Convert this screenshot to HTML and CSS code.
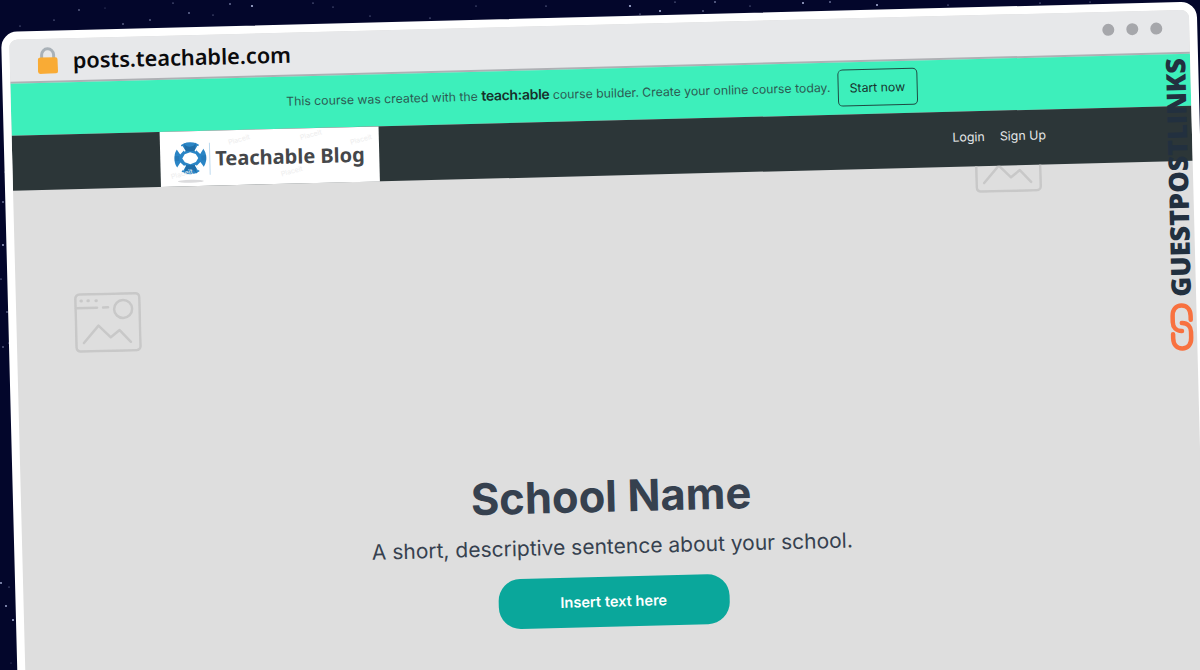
FILE: index.html
```html
<!DOCTYPE html>
<html lang="en">
<head>
<meta charset="utf-8">
<title>posts.teachable.com</title>
<link rel="stylesheet" href="styles.css">
</head>
<body>
<svg class="stars" viewBox="0 0 1200 670" aria-hidden="true">
  <g fill="#aeb6dc">
    <circle cx="79" cy="10" r=".7"/><circle cx="252" cy="6" r="1.1"/><circle cx="189" cy="13" r=".8"/><circle cx="54" cy="20" r=".6"/><circle cx="123" cy="24" r=".7"/><circle cx="150" cy="20" r=".7"/><circle cx="230" cy="4" r=".8"/><circle cx="173" cy="3" r=".6"/><circle cx="313" cy="3" r=".6"/><circle cx="333" cy="7" r=".5"/><circle cx="213" cy="15" r=".5"/><circle cx="20" cy="26" r=".5"/><circle cx="105" cy="8" r=".4"/><circle cx="370" cy="16" r=".5"/>
    <circle cx="430" cy="18" r=".6"/><circle cx="546" cy="6" r=".6"/><circle cx="630" cy="6" r="1.1"/><circle cx="660" cy="11" r="1"/><circle cx="640" cy="14" r=".6"/><circle cx="675" cy="2" r=".6"/><circle cx="703" cy="11" r=".7"/><circle cx="715" cy="2" r=".8"/><circle cx="803" cy="3" r="1"/><circle cx="830" cy="2" r=".8"/><circle cx="877" cy="5" r="1"/><circle cx="750" cy="6" r=".5"/><circle cx="476" cy="6" r=".5"/><circle cx="948" cy="5" r=".6"/><circle cx="1040" cy="3" r=".6"/><circle cx="1090" cy="2" r=".5"/>
    <circle cx="5" cy="172" r=".5"/><circle cx="3" cy="202" r=".8"/><circle cx="3" cy="245" r=".9"/><circle cx="1" cy="279" r=".6"/><circle cx="7" cy="312" r=".7"/><circle cx="9" cy="343" r=".6"/><circle cx="3" cy="347" r=".7"/>
    <circle cx="1" cy="583" r=".9"/><circle cx="9" cy="587" r=".5"/><circle cx="6" cy="606" r=".9"/><circle cx="13" cy="620" r="1"/><circle cx="11" cy="663" r=".4"/>
  </g>
</svg>
<main class="window">
  <header class="address-bar">
    <svg class="lock" viewBox="0 0 20 27" aria-hidden="true">
      <path d="M4 12V8a6 6 0 0 1 12 0v4" fill="none" stroke="#a9b1b8" stroke-width="3"/>
      <rect y="10.500" width="20" height="16.500" rx="2.500" fill="#f9ab35"/>
    </svg>
    <span class="url">posts.teachable.com</span>
    <div class="dots"><i class="dot"></i><i class="dot"></i><i class="dot"></i></div>
  </header>
  <div class="promo">
    <p class="promo-text">This course was created with the <b class="brand">teach:able</b> course builder. Create your online course today.</p>
    <a class="start-btn">Start now</a>
  </div>
  <nav class="navbar">
    <a class="logo">
      <span class="mark-text mt1">Placeit</span><span class="mark-text mt2">Placeit</span><span class="mark-text mt3">Placeit</span><span class="mark-text mt4">Placeit</span><span class="mark-text mt5">Placeit</span>
      <svg class="logo-mark" viewBox="0 0 34 44" aria-hidden="true">
        <ellipse cx="16" cy="40" rx="13" ry="1.500" fill="#dcdcde"/>
        <circle cx="16" cy="17" r="16" fill="#2b86c6"/>
        <path d="M10 1C11 7 21 7 22 1L21 10H11ZM10 33C11 27 21 27 22 33L21 24H11Z" fill="#1f6ea8"/>
        <path d="M2 7 6.500 3 10 9 6 13ZM30 7 25.500 3 22 9 26 13ZM2 27l4.500 4L10 25l-4-4ZM30 27l-4.500 4L22 25l4-4Z" fill="#fff"/>
        <path d="M16 11l5.500 2 2.500 4-2.500 4-5.500 2-5.500-2-2.500-4 2.500-4Z" fill="#fff"/>
        <path d="M11 10 8 5M21 10l3-5M11 24l-3 5M21 24l3 5" stroke="#fff" stroke-width="1.400"/>
        <path d="M0 17h5M27 17h5" stroke="#1f6ea8" stroke-width="5" opacity=".45"/>
      </svg>
      <i class="logo-rule"></i>
      <span class="logo-text">Teachable Blog</span>
    </a>
    <div class="nav-links"><a>Login</a><a>Sign Up</a></div>
  </nav>
  <section class="hero">
    <svg class="placeholder ph-one" viewBox="0 0 67 60" aria-hidden="true"><use href="#ph"/></svg>
    <svg class="placeholder ph-two" viewBox="0 0 67 60" aria-hidden="true">
      <g id="ph" fill="none" stroke="#c8c8c8" stroke-width="2.500" stroke-linecap="round" stroke-linejoin="round">
        <rect x="1.500" y="1.500" width="64" height="57" rx="4"/>
        <path d="M2 15h21M29 15h5"/>
        <circle cx="49" cy="17" r="9"/>
        <path d="M9 50 24 33l12 12 9-7 11 12"/>
        <path d="M7 8h.5M14 8h.5M22 8h.5" stroke-width="3"/>
      </g>
    </svg>
    <h1 class="hero-title">School Name</h1>
    <p class="hero-sub">A short, descriptive sentence about your school.</p>
    <a class="hero-btn">Insert text here</a>
  </section>
  <aside class="badge">
    <span class="badge-text">GUESTPOSTLINKS</span>
    <svg class="chain" viewBox="0 0 24 48" aria-hidden="true">
      <g fill="none" stroke="#f8713f" stroke-width="4.500" stroke-linecap="round">
        <path d="M12 28C6 28 3 24 3 19V13C3 6 7 2.500 12 2.500S21 6 21 13V17"/>
        <path d="M12 20C18 20 21 24 21 29V35C21 42 17 45.500 12 45.500S3 42 3 35V31"/>
      </g>
    </svg>
  </aside>
</main>
</body>
</html>
```

FILE: styles.css
```css
* { box-sizing: border-box; }
html, body { margin: 0; height: 100%; }
body {
  position: relative;
  overflow: hidden;
  background: #03062b;
  font-family: Inter, "Liberation Sans", sans-serif;
}
.stars { position: absolute; inset: 0; width: 1200px; height: 670px; }

.window {
  position: absolute;
  left: 0.5px;
  top: 32px;
  width: 1196px;
  height: 780px;
  display: flex;
  flex-direction: column;
  border: 8px solid #fff;
  border-radius: 16px;
  background: #dedede;
  overflow: hidden;
  transform: rotate(-1.46deg);
  transform-origin: 0 0;
}

.address-bar {
  height: 44px;
  flex: none;
  display: flex;
  align-items: center;
  padding: 0 28px;
  background: #e7e8ea;
  border-bottom: 2px solid #aeb0b4;
}
.lock { width: 20px; height: 27px; flex: none; }
.url {
  margin-left: 15px;
  font-family: "Noto Sans", sans-serif;
  font-size: 21.700px;
  font-weight: 600;
  color: #0b0b0d;
}
.dots { margin: -6px -1px 0 auto; display: flex; gap: 12px; }
.dot { width: 12px; height: 12px; border-radius: 50%; background: #a6a7ab; }

.promo {
  height: 52px;
  flex: none;
  display: flex;
  align-items: center;
  justify-content: center;
  gap: 7px;
  padding: 0 0 2px 2px;
  background: #3defbb;
  color: #2c5a52;
  font-size: 12.250px;
}
.promo-text { margin: 0 0 4px; }
.brand { color: #17302b; font-size: 14px; font-weight: 600; letter-spacing: -0.3px; }
.start-btn {
  width: 80px;
  height: 37px;
  display: flex;
  align-items: center;
  justify-content: center;
  border: 1px solid #1f4a42;
  border-radius: 5px;
  color: #17302b;
}

.navbar {
  height: 55px;
  flex: none;
  display: flex;
  align-items: center;
  justify-content: space-between;
  padding: 0 146px 0 148px;
  background: #2c3638;
}
.logo {
  position: relative;
  width: 219px;
  height: 100%;
  display: flex;
  align-items: center;
  padding-left: 14px;
  background: #fff;
  overflow: hidden;
}
.logo-mark { width: 34px; height: 44px; flex: none; margin-top: 8px; }
.logo-rule { width: 1px; height: 32px; margin: 0 5px 0 1px; background: #bcd9ee; }
.logo-text {
  font-family: "Noto Sans", sans-serif;
  font-size: 20px;
  font-weight: 700;
  color: #45474a;
  white-space: nowrap;
}
.mark-text { position: absolute; font-size: 7px; color: #ededed; transform: rotate(-14deg); }
.mt1 { left: 10px; top: 38px; }
.mt2 { left: 68px; top: 5px; }
.mt3 { left: 120px; top: 38px; }
.mt4 { left: 140px; top: 2px; }
.mt5 { left: 190px; top: 8px; }

.nav-links { display: flex; gap: 15px; margin-bottom: 4px; font-size: 12.400px; color: #e6e8e8; }

.hero {
  position: relative;
  flex: 1;
  display: flex;
  flex-direction: column;
  align-items: center;
  padding-top: 292px;
  overflow: hidden;
  color: #36414f;
}
.placeholder { position: absolute; width: 67px; height: 60px; }
.ph-one { left: 58px; top: 104px; }
.ph-two { left: 962px; top: -33px; }
.hero-title { margin: 0; font-size: 43.500px; font-weight: 700; line-height: 56px; }
.hero-sub { margin: 7px 0 0; font-size: 21px; font-weight: 400; line-height: 32px; }
.hero-btn {
  width: 231px;
  height: 50px;
  margin-top: 14px;
  display: flex;
  align-items: center;
  justify-content: center;
  border-radius: 22px;
  background: #0aa79b;
  color: #fff;
  font-size: 14.600px;
  font-weight: 600;
}

.badge {
  position: absolute;
  top: 48px;
  right: 2px;
  width: 26px;
  display: flex;
  flex-direction: column;
  align-items: center;
  gap: 6px;
}
.badge-text {
  writing-mode: vertical-rl;
  transform: rotate(180deg);
  font-family: "Open Sans", sans-serif;
  font-size: 27px;
  font-weight: 800;
  line-height: 26px;
  color: #22303f;
  white-space: nowrap;
}
.chain { width: 24px; height: 48px; flex: none; }
```
